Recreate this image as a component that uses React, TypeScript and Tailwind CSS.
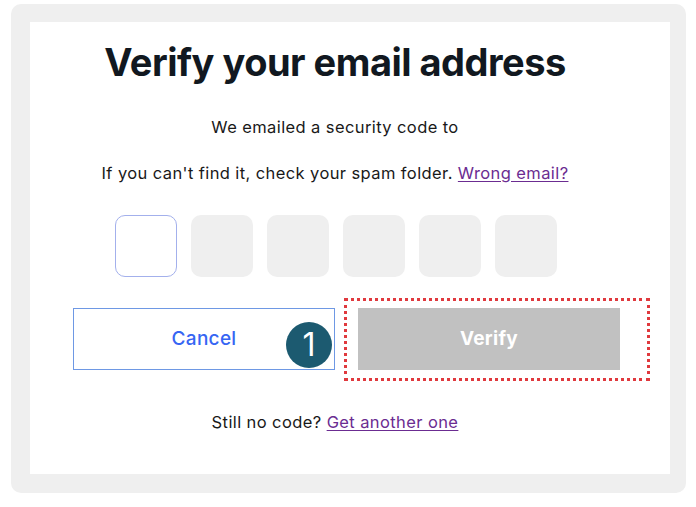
import React from "react";

const font = { fontFamily: "Inter, 'Liberation Sans', sans-serif" };

const CodeBox: React.FC<{ active?: boolean }> = ({ active }) => (
  <div
    className={
      active
        ? "w-[62px] h-[62px] rounded-[10px] border-[1.5px] border-[#a3b0ec] bg-white"
        : "w-[62px] h-[62px] rounded-[10px] bg-[#efefef]"
    }
  />
);

export default function App() {
  return (
    <div className="w-[696px] h-[507px] bg-white" style={font}>
      <div className="ml-[11px] mt-[4px] w-[675px] h-[489px] rounded-[10px] bg-[#efefef] pl-[19px] pt-[18px]">
        <div className="w-[640px] h-[452px] bg-white pl-[43px] pt-[17px]">
          <div className="w-[524px] flex flex-col items-center text-[#111820]">
            <h1 className="text-[38px] leading-[46px] font-bold tracking-[-0.5px] whitespace-nowrap">
              Verify your email address
            </h1>
            <p className="mt-[30px] text-[16.5px] leading-[24px] tracking-[0.4px] text-[#191919]">
              We emailed a security code to
            </p>
            <p className="mt-[22px] text-[16.5px] leading-[24px] whitespace-nowrap tracking-[0.4px] text-[#191919]">
              If you can't find it, check your spam folder.{" "}
              <a className="text-[#6b2c91] underline underline-offset-2">
                Wrong email?
              </a>
            </p>
            <div className="mt-[30px] flex gap-[14px] pl-[1px]">
              <CodeBox active />
              <CodeBox />
              <CodeBox />
              <CodeBox />
              <CodeBox />
              <CodeBox />
            </div>
          </div>
          <div className="mt-[31px] flex gap-[23px] w-[547px]">
            <div className="relative w-[262px] h-[62px]">
              <button className="w-full h-full border border-[#6e98e4] text-[#3665f3] text-[19px] tracking-[0.3px] font-medium">
                Cancel
              </button>
              <span className="absolute left-[213px] top-[14px] w-[46px] h-[46px] rounded-full bg-[#1c5a70] text-white flex items-center justify-center text-[32px] font-normal leading-none">
                1
              </span>
            </div>
            <div className="relative w-[262px] h-[62px]">
              <span className="absolute -left-[14px] -top-[10px] w-[306px] h-[83px] border-[3px] border-dotted border-[#e0393e]" />
              <button className="relative w-full h-full bg-[#c1c1c1] text-white text-[19px] tracking-[0.3px] font-bold">
                Verify
              </button>
            </div>
          </div>
          <div className="w-[524px] mt-[40px] text-center text-[16.5px] leading-[24px] text-[#191919] tracking-[0.4px]">
            Still no code?{" "}
            <a className="text-[#6b2c91] underline underline-offset-2">
              Get another one
            </a>
          </div>
        </div>
      </div>
    </div>
  );
}
